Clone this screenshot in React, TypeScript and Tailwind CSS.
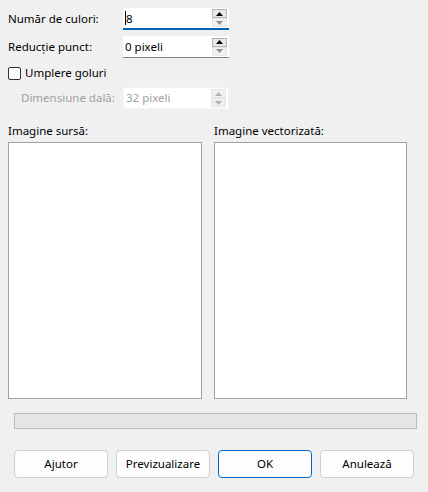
const font = { fontFamily: '"Segoe UI", "Noto Sans", "Open Sans", sans-serif' }

function Spin({ value, focused, disabled }: { value: string; focused?: boolean; disabled?: boolean }) {
  return (
    <div
      className={`relative flex h-[22px] w-[106px] shrink-0 items-center bg-white ${
        disabled ? 'border border-[#f5f5f5]' : focused ? 'border-b-2 border-[#005fb8]' : 'border-b border-[#868686]'
      }`}
    >
      <span className={`flex-1 pl-[2px] ${disabled ? 'text-[#a0a0a0]' : 'text-black'}`}>
        {focused && <span className="inline-block h-[14px] w-px translate-y-[2px] bg-black align-baseline" />}
        {value}
      </span>
      <div className="mr-[2px] flex flex-col self-center bg-[#f0f0f0]">
        <div
          className={`flex h-[9px] w-[15px] items-center justify-center border ${
            disabled ? 'border-[#e6e6e6]' : 'border-[#b4b4b4] bg-[#e8e8e8]'
          }`}
        >
          <svg width="7" height="4" viewBox="0 0 7 4">
            <path d="M0 4 L3.5 0 L7 4 Z" fill={disabled ? '#b0b0b0' : '#000'} />
          </svg>
        </div>
        <div className="flex h-[9px] w-[15px] items-center justify-center border border-[#e6e6e6]">
          <svg width="7" height="4" viewBox="0 0 7 4">
            <path d="M0 0 L3.5 4 L7 0 Z" fill={disabled ? '#b0b0b0' : '#909090'} />
          </svg>
        </div>
      </div>
    </div>
  )
}

function Btn({ label, primary }: { label: string; primary?: boolean }) {
  return (
    <button
      className={`h-[28px] w-[94px] rounded-[4px] border bg-[#fdfdfd] text-[11.5px] text-black ${
        primary ? 'border-[#0067c0]' : 'border-[#d0d0d0]'
      }`}
    >
      {label}
    </button>
  )
}

export default function App() {
  return (
    <div className="flex h-[492px] w-[428px] flex-col bg-[#f0f0f0] text-[11.5px] text-black" style={font}>
      <div className="flex flex-col pt-[8px]">
        <div className="flex h-[22px] items-center">
          <span className="w-[123px] shrink-0 whitespace-nowrap pl-[8px]">Număr de culori:</span>
          <Spin value="8" focused />
        </div>
        <div className="mt-[6px] flex h-[22px] items-center">
          <span className="w-[123px] shrink-0 whitespace-nowrap pl-[8px]">Reducție punct:</span>
          <Spin value="0 pixeli" />
        </div>
        <label className="mt-[7px] flex h-[16px] items-center gap-[4px] pl-[8px]">
          <span className="h-[13px] w-[13px] rounded-[2px] border border-[#333] bg-white" />
          <span>Umplere goluri</span>
        </label>
        <div className="mt-[6px] flex h-[22px] items-center">
          <span className="w-[123px] shrink-0 whitespace-nowrap pl-[21px] text-[#a0a0a0]">Dimensiune dală:</span>
          <Spin value="32 pixeli" disabled />
        </div>
      </div>

      <div className="mt-[13px] flex gap-[12px] px-[8px]">
        <div className="flex w-[194px] flex-col">
          <span className="h-[20px] leading-[18px]">Imagine sursă:</span>
          <div className="h-[257px] border border-[#a0a0a0] bg-white" />
        </div>
        <div className="flex w-[193px] flex-col">
          <span className="h-[20px] leading-[18px]">Imagine vectorizată:</span>
          <div className="h-[257px] border border-[#a0a0a0] bg-white" />
        </div>
      </div>

      <div className="ml-[14px] mt-[14px] h-[16px] w-[403px] border border-[#bcbcbc] bg-[#e6e6e6]" />

      <div className="ml-[14px] mt-[21px] flex gap-[8px]">
        <Btn label="Ajutor" />
        <Btn label="Previzualizare" />
        <Btn label="OK" primary />
        <Btn label="Anulează" />
      </div>
    </div>
  )
}
